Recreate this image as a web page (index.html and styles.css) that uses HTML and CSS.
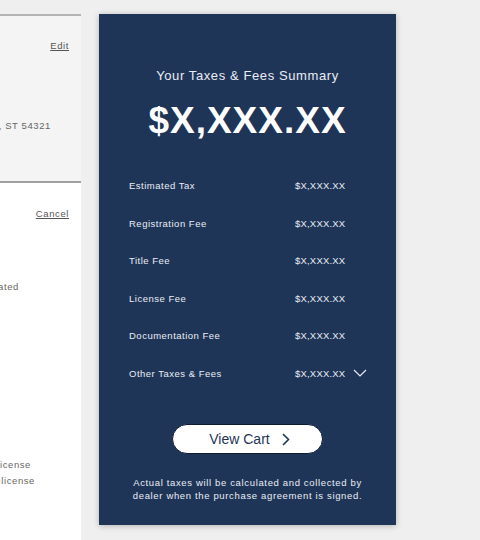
FILE: index.html
```html
<!DOCTYPE html>
<html>
<head>
	<title>Taxes &amp; Fees Summary</title>
	<link rel="stylesheet" href="styles.css">
</head>
<body>
	<div class="page">
		<div class="side">
			<div class="side-top">
				<div class="link-row"><a class="link">Edit</a></div>
				<div class="clip addr"><span>123 Main Street, Anytown, ST 54321</span></div>
			</div>
			<div class="side-bottom">
				<div class="link-row"><a class="link">Cancel</a></div>
				<div class="clip est"><span>Taxes and fees are estimated</span></div>
				<div class="clip lic1"><span>I have a valid driver's license</span></div>
				<div class="clip lic2"><span>I do not have a valid driver's license</span></div>
			</div>
		</div>

		<div class="card">
			<h2 class="title">Your Taxes &amp; Fees Summary</h2>
			<div class="total">$X,XXX.XX</div>
			<ul class="fees">
				<li><span class="name">Estimated Tax</span><span class="amt">$X,XXX.XX</span></li>
				<li><span class="name">Registration Fee</span><span class="amt">$X,XXX.XX</span></li>
				<li><span class="name">Title Fee</span><span class="amt">$X,XXX.XX</span></li>
				<li><span class="name">License Fee</span><span class="amt">$X,XXX.XX</span></li>
				<li><span class="name">Documentation Fee</span><span class="amt">$X,XXX.XX</span></li>
				<li><span class="name">Other Taxes &amp; Fees</span><span class="amt">$X,XXX.XX</span>
					<svg class="caret" width="14" height="8" viewBox="0 0 14 8"><polyline points="1,1 7,7 13,1" fill="none" stroke="#e6ebf3" stroke-width="1.2"/></svg>
				</li>
			</ul>
			<div class="btn-wrap">
				<button class="btn">View Cart
					<svg width="9" height="13" viewBox="0 0 9 13"><polyline points="2,1 7.5,6.5 2,12" fill="none" stroke="#1f3558" stroke-width="1.6"/></svg>
				</button>
			</div>
			<p class="note">Actual taxes will be calculated and collected by<br>dealer when the purchase agreement is signed.</p>
		</div>
	</div>
</body>
</html>
```

FILE: styles.css
```css
	body{
		margin: 0;
		background: #efefef;
		font-family: "Liberation Sans", Arial, sans-serif;
	}
	.page{
		display: flex;
		gap: 18px;
		height: 540px;
		overflow: hidden;
	}
	.side{
		width: 81px;
		margin-top: 14px;
		display: flex;
		flex-direction: column;
		flex-shrink: 0;
	}
	.side-top{
		height: 165px;
		border-top: 2px solid #b4b4b4;
		background: #f4f4f4;
	}
	.side-bottom{
		flex: 1;
		border-top: 2px solid #a0a0a0;
		background: #fff;
	}
	.link-row{
		display: flex;
		justify-content: flex-end;
		padding-right: 12px;
	}
	.side-top .link-row{
		margin-top: 24px;
	}
	.side-bottom .link-row{
		margin-top: 25px;
	}
	.link{
		font-size: 9.5px;
		letter-spacing: 0.6px;
		color: #555;
		text-decoration: underline;
		line-height: 12px;
	}
	.clip{
		display: flex;
		justify-content: flex-end;
		white-space: nowrap;
		overflow: hidden;
		font-size: 9.5px;
		letter-spacing: 0.6px;
		color: #666;
		line-height: 14px;
	}
	.addr{
		margin-top: 67px;
		padding-right: 30px;
	}
	.est{
		margin-top: 60px;
		padding-right: 62px;
	}
	.lic1{
		margin-top: 164px;
		padding-right: 50px;
	}
	.lic2{
		margin-top: 2px;
		padding-right: 46px;
	}
	.card{
		width: 297px;
		height: 511px;
		margin-top: 14px;
		box-sizing: border-box;
		padding-top: 54px;
		background: #1f3558;
		box-shadow: 0 1px 6px rgba(0,0,0,0.25);
		color: #e9edf4;
		flex-shrink: 0;
	}
	.title{
		margin: 0;
		font-size: 13px;
		font-weight: normal;
		letter-spacing: 0.6px;
		line-height: 16px;
		text-align: center;
	}
	.total{
		margin-top: 17px;
		font-size: 37px;
		font-weight: bold;
		letter-spacing: 1px;
		line-height: 40px;
		text-align: center;
		color: #fff;
	}
	.fees{
		list-style: none;
		margin: 26px 0 0 0;
		padding: 0 0 0 30px;
	}
	.fees li{
		display: flex;
		align-items: center;
		height: 37.5px;
		font-size: 9.5px;
		letter-spacing: 0.5px;
	}
	.name{
		width: 166px;
	}
	.amt{
		letter-spacing: 0.2px;
	}
	.caret{
		margin-left: 8px;
	}
	.btn-wrap{
		display: flex;
		justify-content: center;
		margin-top: 32px;
	}
	.btn{
		width: 151px;
		height: 30px;
		border: 1px solid #0d1c33;
		border-radius: 15px;
		background: #fff;
		color: #1f3558;
		font-family: "Liberation Sans", Arial, sans-serif;
		font-size: 14px;
		display: flex;
		align-items: center;
		justify-content: center;
		gap: 11px;
		padding: 0 0 0 4px;
	}
	.note{
		margin: 22px 0 0 0;
		font-size: 9.5px;
		letter-spacing: 0.65px;
		line-height: 13px;
		text-align: center;
	}
```
